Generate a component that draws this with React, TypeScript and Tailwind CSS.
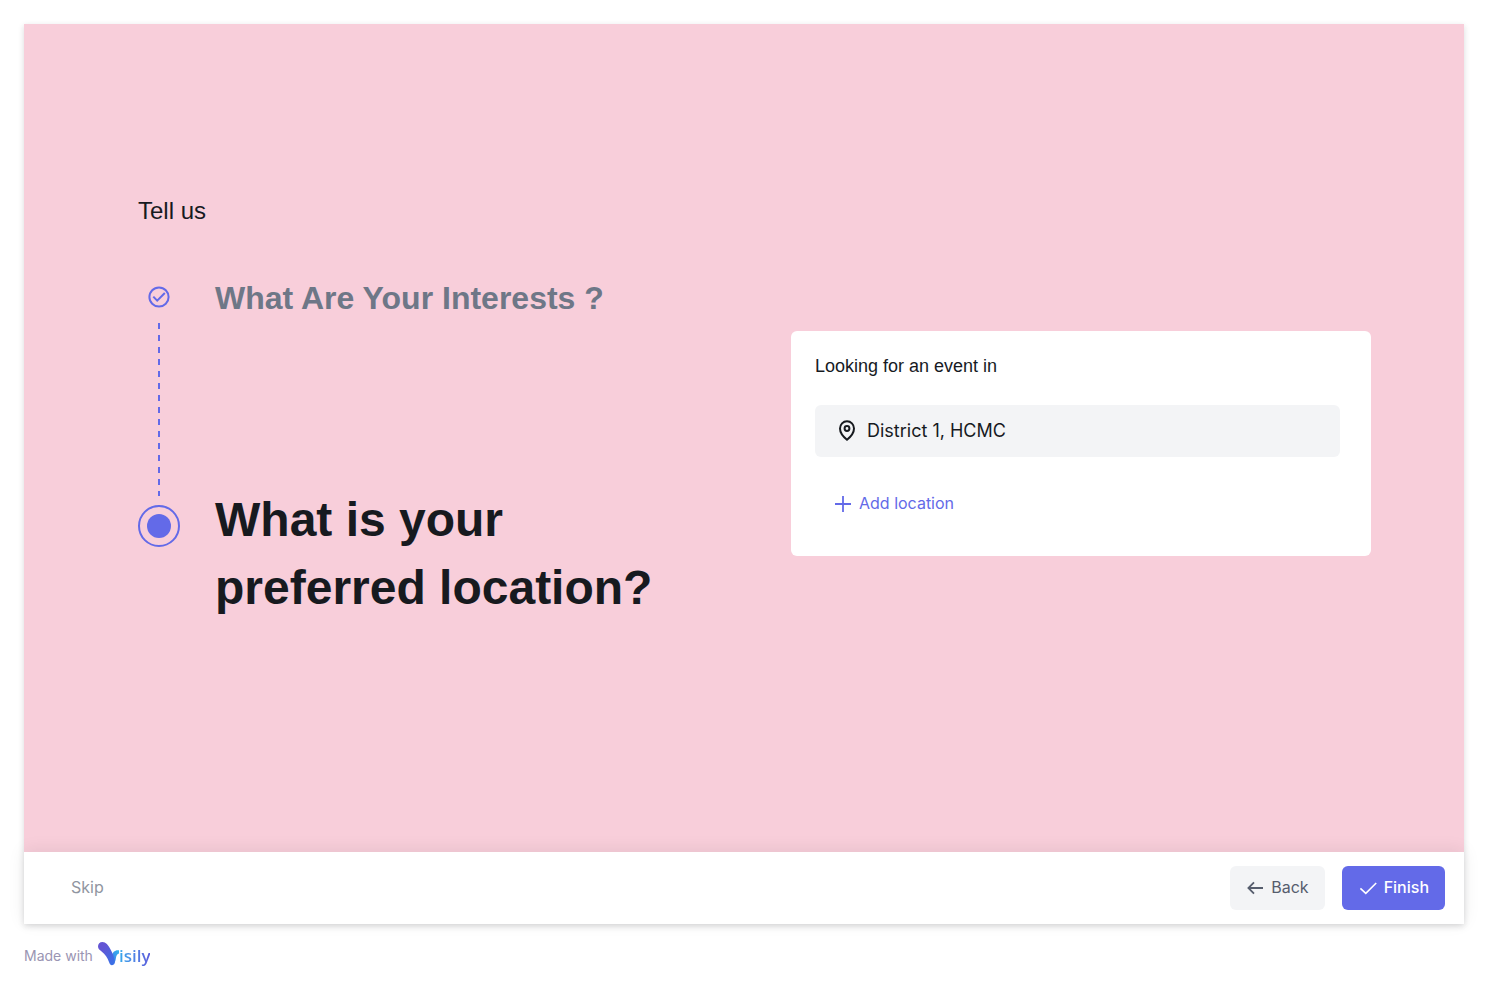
import { useState } from "react";

function CheckCircleIcon() {
  return (
    <svg viewBox="0 0 24 24" className="size-6 shrink-0" fill="none" stroke="currentColor" strokeWidth="2" aria-hidden="true">
      <circle cx="12" cy="12" r="9.6" />
      <path d="M6.3 11.6 10.2 15.6 17.8 8" />
    </svg>
  );
}

function PinIcon() {
  return (
    <svg viewBox="0 0 24 24" className="size-6 shrink-0" fill="none" stroke="currentColor" strokeWidth="2" aria-hidden="true">
      <path d="M19 9.5c0 4.4-4.2 9-7 11.3-2.8-2.3-7-6.900-7-11.300a7 7.300 0 0 1 14 0Z" />
      <circle cx="12" cy="9.5" r="2.4" />
    </svg>
  );
}

function PlusIcon() {
  return (
    <svg viewBox="0 0 16 16" className="size-4 shrink-0 overflow-visible" fill="none" stroke="currentColor" strokeWidth="1.8" aria-hidden="true">
      <path d="M8 1v16M0 9h16" />
    </svg>
  );
}

function ArrowLeftIcon() {
  return (
    <svg viewBox="0 0 16 16" className="size-4 shrink-0 overflow-visible" fill="none" stroke="currentColor" strokeWidth="1.8" aria-hidden="true">
      <path d="M16 9H1.500M7 3.300 1.400 9 7 14.700" />
    </svg>
  );
}

function CheckIcon() {
  return (
    <svg viewBox="0 0 16 16" className="size-4 shrink-0 overflow-visible" fill="none" stroke="currentColor" strokeWidth="1.6" aria-hidden="true">
      <path d="M.4 9.300 5.800 14.400 16.200 4" />
    </svg>
  );
}

function VisilyLogo() {
  return (
    <span className="flex items-center">
      <svg viewBox="0 0 21 28" className="h-7 w-[21px]" aria-hidden="true">
        <defs>
          <linearGradient id="stem" x1="0" y1="0" x2="0.7" y2="1">
            <stop offset="0.3" stopColor="#6355d4" />
            <stop offset="1" stopColor="#3b6fe6" />
          </linearGradient>
          <linearGradient id="arm" x1="1" y1="0" x2="0" y2="1">
            <stop offset="0" stopColor="#35b4ee" />
            <stop offset="1" stopColor="#3f78e8" />
          </linearGradient>
        </defs>
        <path d="M21 8.300c-4-.5-6.600 1.700-7.200 6l.5 8.500c2.600-1.200 3.200-4 3.600-6.500.5-3 1.300-4.200 3.100-4.700Z" fill="url(#arm)" />
        <path d="M4.500 0C1.700 0 0 2 0 4.300c0 2.500 1.500 3.700 3.600 5.200 3.600 2.600 6 6.300 7.400 10.500.6 2 1.400 3.200 3 3.200 1.900 0 2.800-1.300 2.800-3.100 0-2.800-1.400-7.500-4.100-12.300C10.300 2.800 7.700 0 4.500 0Z" fill="url(#stem)" />
      </svg>
      <span className="bg-linear-to-r from-[#35a9ec] to-[#5a5bdc] bg-clip-text font-['Open_Sans',sans-serif] text-[17px] leading-6 font-semibold text-transparent">
        isily
      </span>
    </span>
  );
}

export default function App() {
  const [place, setPlace] = useState("District 1, HCMC");

  return (
    <div className="flex min-h-screen flex-col bg-white px-6 pt-6 font-['Inter',sans-serif] text-[#171a1f]">
      <div className="flex flex-1 flex-col shadow-[0_2px_6px_rgba(23,26,31,0.16)]">
        <main className="flex flex-1 items-start justify-between gap-8 bg-[#f8ceda] pr-[93px] pl-[114px] font-['Liberation_Sans',sans-serif]">
          <section className="pt-[169px] pb-12">
            <p className="text-2xl leading-9">Tell us</p>
            <ol className="mt-[45px]">
              <li className="flex gap-[35px]">
                <div className="flex w-[42px] shrink-0 flex-col items-center pt-[11px] text-[#636ae8]">
                  <CheckCircleIcon />
                  <span className="mt-[14px] -mb-[10px] h-[173px] w-[2px] bg-[repeating-linear-gradient(to_bottom,#636ae8_0_6px,transparent_6px_12px)]" />
                </div>
                <h2 className="text-[32px] leading-[48px] font-bold text-[#6e7787]">What Are Your Interests ?</h2>
              </li>
              <li className="flex gap-[35px]">
                <div className="shrink-0 pt-[19px]">
                  <span className="flex size-[42px] items-center justify-center rounded-full border-2 border-[#636ae8]">
                    <span className="size-6 rounded-full bg-[#636ae8]" />
                  </span>
                </div>
                <h1 className="max-w-[480px] text-5xl leading-[68px] font-bold">What is your preferred location?</h1>
              </li>
            </ol>
          </section>

          <form className="mt-[307px] mb-12 w-full max-w-[580px] rounded-md bg-white pt-[21px] pr-[31px] pb-[37px] pl-6">
            <label htmlFor="place" className="block text-lg leading-7">
              Looking for an event in
            </label>
            <div className="mt-[25px] flex h-[52px] items-center gap-2 rounded-md bg-[#f3f4f6] px-5">
              <PinIcon />
              <input
                id="place"
                type="text"
                value={place}
                onChange={(event) => setPlace(event.target.value)}
                className="w-full min-w-0 bg-transparent font-['Inter',sans-serif] text-lg outline-none"
              />
            </div>
            <button type="button" className="mt-[30px] flex h-8 items-center gap-2 px-5 font-['Inter',sans-serif] text-base text-[#636ae8]">
              <PlusIcon />
              Add location
            </button>
          </form>
        </main>

        <nav className="flex h-[72px] items-center bg-white pr-[19px] pl-[47px] shadow-[0_-2px_16px_rgba(23,26,31,0.08)]">
          <button type="button" className="h-11 pb-[2px] text-base text-[#9095a0]">
            Skip
          </button>
          <button type="button" className="ml-auto flex h-11 items-center gap-2 rounded-md bg-[#f3f4f6] pr-4 pb-[2px] pl-[17px] text-base text-[#565d6d]">
            <ArrowLeftIcon />
            Back
          </button>
          <button type="button" className="ml-[17px] flex h-11 items-center gap-2 rounded-md bg-[#636ae8] pr-4 pb-[2px] pl-[18px] text-base font-medium text-white">
            <CheckIcon />
            Finish
          </button>
        </nav>
      </div>

      <footer className="flex h-16 items-center gap-[5px] text-sm text-[#9a95b3]">
        Made with
        <VisilyLogo />
      </footer>
    </div>
  );
}
